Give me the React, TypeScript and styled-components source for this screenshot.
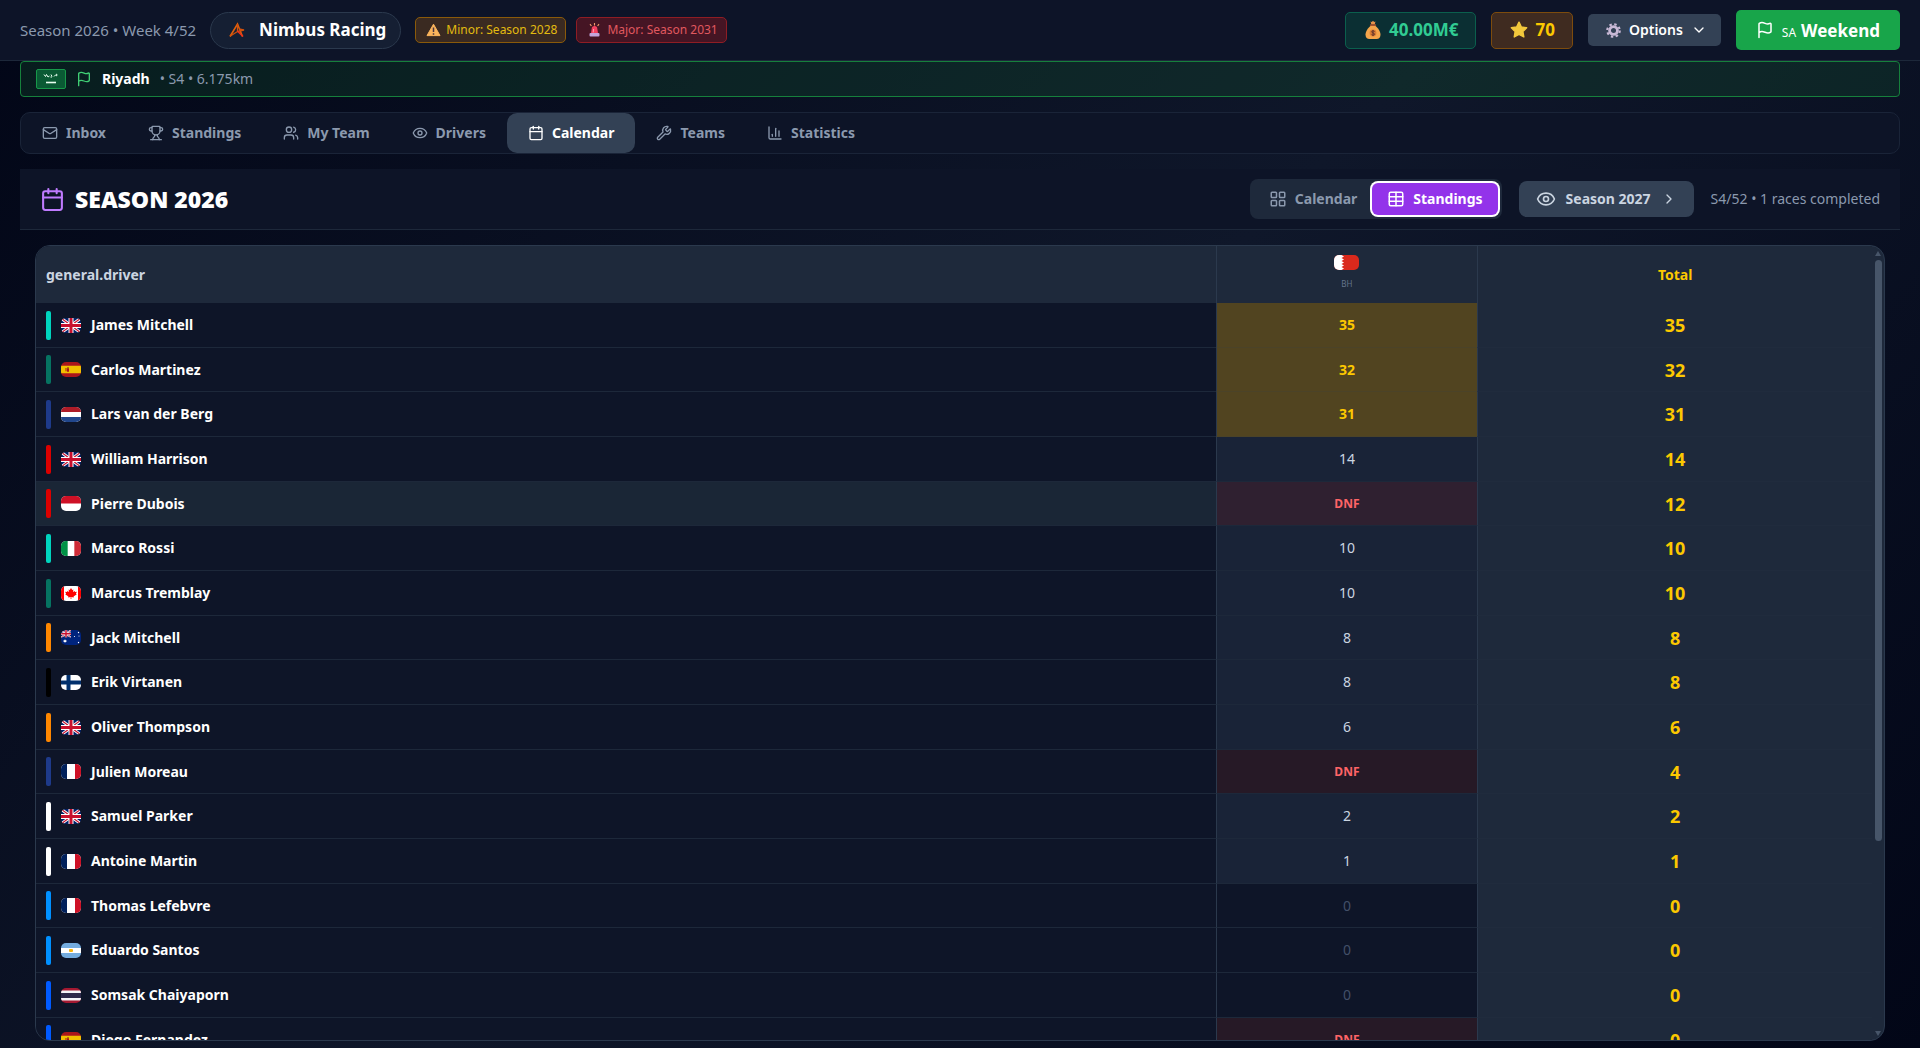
import React from "react";
import styled, { createGlobalStyle, css } from "styled-components";
import {
  Calendar,
  ChartColumn,
  ChevronDown,
  ChevronRight,
  Eye,
  Flag as FlagIcon,
  LayoutGrid,
  Mail,
  Table as TableIcon,
  Trophy,
  Users,
  Wrench,
} from "lucide-react";

const color = {
  text: "#ffffff",
  soft: "#cbd5e1",
  muted: "#8b99ae",
  faint: "#435068",
  line: "#2b394d",
  row: "#1d283a",
  slate: "#1e293b",
  button: "#334155",
  gold: "#fcc800",
};

const GlobalStyle = createGlobalStyle`
  *, *::before, *::after { box-sizing: border-box; }
  body {
    margin: 0;
    background: #020617;
    color: ${color.text};
    font-family: "Noto Sans", "Open Sans", sans-serif;
    font-size: 14px;
    line-height: 20px;
  }
  button { font: inherit; color: inherit; border: 0; margin: 0; cursor: pointer; }
`;

/* ---------- page ---------- */

const Page = styled.div`
  display: flex;
  flex-direction: column;
  height: 100vh;
  overflow: hidden;
  background: linear-gradient(135deg, #020617 0%, #0f172a 50%, #020617 100%);
`;

const Header = styled.header`
  display: flex;
  align-items: center;
  justify-content: space-between;
  flex: none;
  padding: 10px 20px;
  background: #0d1428;
  border-bottom: 1px solid ${color.row};
`;

const Group = styled.div<{ $gap: number }>`
  display: flex;
  align-items: center;
  gap: ${(p) => p.$gap}px;
`;

const WeekText = styled.span`
  color: ${color.muted};
  font-size: 15px;
`;

const TeamPill = styled.div`
  display: flex;
  align-items: center;
  gap: 13px;
  height: 37px;
  padding: 0 14px 0 17px;
  border: 1px solid ${color.line};
  border-radius: 20px;
  background: #151f33;
  font-size: 17px;
  font-weight: 700;
`;

type Tone = "amber" | "red" | "green" | "brown";
const tones: Record<Tone, [string, string, string]> = {
  amber: ["#3a2a21", "#8a5a0a", "#e3bb10"],
  red: ["#451524", "#8f1d24", "#e0585f"],
  green: ["#0b2f33", "#0b5f4d", "#31cc93"],
  brown: ["#3f2b20", "#7d4c0d", color.gold],
};

const tone = css<{ $tone: Tone }>`
  background: ${(p) => tones[p.$tone][0]};
  border: 1px solid ${(p) => tones[p.$tone][1]};
  color: ${(p) => tones[p.$tone][2]};
`;

const Notice = styled.span<{ $tone: Tone }>`
  ${tone}
  display: flex;
  align-items: center;
  gap: 5px;
  height: 26px;
  padding: 0 8px 0 10px;
  border-radius: 5px;
  font-size: 12px;
`;

const Stat = styled.div<{ $tone: Tone }>`
  ${tone}
  display: flex;
  align-items: center;
  gap: 7px;
  height: 37px;
  padding: 0 17px 0 18px;
  border-radius: 5px;
  font-size: 17px;
  font-weight: 700;
`;

const OptionsButton = styled.button`
  display: flex;
  align-items: center;
  gap: 8px;
  height: 32px;
  padding: 0 14px 0 18px;
  border-radius: 5px;
  background: ${color.button};
  font-weight: 600;
`;

const WeekendButton = styled.button`
  display: flex;
  align-items: center;
  gap: 8px;
  height: 40px;
  padding: 0 20px;
  border-radius: 5px;
  background: #18a54a;
  font-size: 17px;
  font-weight: 700;
`;

const WeekendLabel = styled.span`
  display: flex;
  align-items: baseline;
  gap: 5px;
  padding-top: 4px;

  small { font-size: 12px; font-weight: 400; }
`;

const Main = styled.main`
  display: flex;
  flex-direction: column;
  flex: 1;
  gap: 15px;
  min-height: 0;
  padding: 0 20px 7px;
`;

const Banner = styled.section`
  display: flex;
  align-items: center;
  flex: none;
  gap: 10px;
  height: 36px;
  padding: 0 15px;
  border: 1px solid #16803c;
  border-radius: 4px;
  background: rgba(20, 83, 45, 0.3);
  color: ${color.muted};
`;

const City = styled.strong`
  color: ${color.text};
  font-weight: 700;
`;

/* ---------- navigation ---------- */

const Nav = styled.nav`
  display: flex;
  flex: none;
  border: 1px solid #1a2438;
  border-radius: 10px;
  background: #0d1427;
`;

const NavButton = styled.button<{ $active?: boolean }>`
  display: flex;
  align-items: center;
  gap: 8px;
  height: 40px;
  padding: 0 21px;
  border-radius: 10px;
  background: ${(p) => (p.$active ? color.button : "transparent")};
  color: ${(p) => (p.$active ? color.text : color.muted)};
  font-weight: 700;
`;

/* ---------- season bar ---------- */

const Season = styled.section`
  display: flex;
  align-items: center;
  justify-content: space-between;
  flex: none;
  height: 61px;
  padding: 0 20px;
  border-bottom: 1px solid ${color.row};
  background: #0d1427;
`;

const Title = styled.h1`
  display: flex;
  align-items: center;
  gap: 10px;
  margin: 0;
  font-size: 23px;
  font-weight: 900;
  line-height: 32px;

  svg { color: #bf7bff; }
`;

const Toggle = styled.div`
  display: flex;
  padding: 4px;
  border-radius: 8px;
  background: ${color.slate};
`;

const ToggleButton = styled.button<{ $active?: boolean }>`
  display: flex;
  align-items: center;
  gap: 8px;
  height: 32px;
  padding: 0 15px;
  border-radius: 6px;
  background: ${(p) => (p.$active ? "#9333ea" : "transparent")};
  color: ${(p) => (p.$active ? color.text : color.muted)};
  box-shadow: ${(p) => (p.$active ? "0 0 0 2px #ffffff" : "none")};
  font-weight: 700;
`;

const SeasonButton = styled.button`
  display: flex;
  align-items: center;
  gap: 10px;
  height: 36px;
  padding: 0 17px;
  border-radius: 8px;
  background: ${color.button};
  color: ${color.soft};
  font-weight: 700;
`;

const Progress = styled.span`
  color: ${color.muted};
`;

/* ---------- standings ---------- */

const Panel = styled.section`
  display: flex;
  flex: 1;
  min-height: 0;
  margin: 0 15px;
  border: 1px solid ${color.line};
  border-radius: 15px;
  background: ${color.slate};
  overflow: hidden;
`;

const Scroller = styled.div`
  flex: 1;
  min-width: 0;
  overflow: hidden;
  background: #0e1528;
`;

const Table = styled.table`
  width: 100%;
  border-spacing: 0;
  table-layout: fixed;
`;

const DriverCol = styled.col`
  width: 64.25%;
`;

const RaceCol = styled.col`
  width: 14.25%;
`;

const Head = styled.th<{ $tone?: string }>`
  height: 57px;
  padding: 0 10px;
  background: ${color.slate};
  color: ${(p) => p.$tone ?? color.soft};
  font-weight: 700;
  text-align: center;

  &:first-child { text-align: left; }
  & + & { border-left: 1px solid ${color.line}; }
`;

const RaceHead = styled.div`
  display: flex;
  flex-direction: column;
  align-items: center;
  gap: 8px;
  padding-bottom: 4px;
  color: #64748b;
  font-size: 8px;
  font-weight: 400;
  line-height: 12px;
`;

const Row = styled.tr<{ $mine?: boolean }>`
  background: ${(p) => (p.$mine ? "#1a2636" : "transparent")};

  & > * {
    height: 45px;
    padding: 0 10px;
    border-bottom: 1px solid ${color.row};
  }
  &:nth-child(3n + 2) > * { height: 44px; }
`;

const DriverCell = styled.th`
  text-align: left;
  font-weight: 700;
`;

const Driver = styled.div`
  display: flex;
  align-items: center;
  gap: 10px;
`;

const TeamBar = styled.span<{ $color: string }>`
  width: 5px;
  height: 29px;
  border-radius: 2px;
  background: ${(p) => p.$color};
`;

type Kind = "podium" | "points" | "dnf" | "none";
const kinds: Record<Kind, [string, string, number, number]> = {
  podium: ["#514420", color.gold, 14, 700],
  points: ["#192337", color.soft, 14, 400],
  dnf: ["#261926", "#ff6467", 12, 700],
  none: ["transparent", color.faint, 14, 400],
};

const RaceCell = styled.td<{ $kind: Kind; $mine?: boolean }>`
  border-left: 1px solid ${color.line};
  background: ${(p) => (p.$mine ? "#2f2030" : kinds[p.$kind][0])};
  color: ${(p) => kinds[p.$kind][1]};
  font-size: ${(p) => kinds[p.$kind][2]}px;
  font-weight: ${(p) => kinds[p.$kind][3]};
  text-align: center;
  ${(p) => p.$kind === "podium" && "&&{ border-bottom-color: #4b4328; }"}
`;

const TotalCell = styled.td`
  border-left: 1px solid ${color.line};
  background: ${color.slate};
  color: ${color.gold};
  font-size: 18px;
  font-weight: 700;
  line-height: 24px;
  text-align: center;

  && { border-bottom-color: #202b3d; }
`;

const Scrollbar = styled.div`
  display: flex;
  flex-direction: column;
  align-items: center;
  gap: 4px;
  flex: none;
  width: 12px;
  padding: 5px 0 4px;

  svg { flex: none; }
  svg:last-child { margin-top: auto; }
`;

const Thumb = styled.div`
  width: 7px;
  height: 74%;
  border-radius: 4px;
  background: #475569;
`;

/* ---------- flags ---------- */

const FlagBox = styled.svg`
  flex: none;
  display: block;
  border-radius: 5px;
`;

type Country = "gb" | "es" | "nl" | "mc" | "it" | "ca" | "au" | "fi" | "fr" | "ar" | "th" | "bh";

const names: Record<Country, string> = {
  gb: "United Kingdom",
  es: "Spain",
  nl: "Netherlands",
  mc: "Monaco",
  it: "Italy",
  ca: "Canada",
  au: "Australia",
  fi: "Finland",
  fr: "France",
  ar: "Argentina",
  th: "Thailand",
  bh: "Bahrain",
};

const unionJack = (
  <>
    <rect width="20" height="15" fill="#012169" />
    <path d="M0 0L20 15M20 0L0 15" stroke="#fff" strokeWidth="3" />
    <path d="M0 0L20 15M20 0L0 15" stroke="#c8102e" strokeWidth="1.2" />
    <path d="M10 0V15M0 7.5H20" stroke="#fff" strokeWidth="5" />
    <path d="M10 0V15M0 7.5H20" stroke="#c8102e" strokeWidth="3" />
  </>
);

const art: Record<Country, React.ReactNode> = {
  gb: unionJack,
  es: (
    <>
      <rect width="20" height="15" fill="#aa151b" />
      <rect y="3.75" width="20" height="7.5" fill="#f1bf00" />
      <path d="M4.5 6v3.2h1V6zM6 6.3h2v2.6a1 1 0 0 1-2 0z" fill="#ad1519" />
      <circle cx="7" cy="5.8" r=".7" fill="#7a3b16" />
    </>
  ),
  nl: (
    <>
      <rect width="20" height="15" fill="#fff" />
      <rect width="20" height="5" fill="#ae1c28" />
      <rect y="10" width="20" height="5" fill="#21468b" />
    </>
  ),
  mc: (
    <>
      <rect width="20" height="15" fill="#fff" />
      <rect width="20" height="7.5" fill="#ce1126" />
    </>
  ),
  it: (
    <>
      <rect width="20" height="15" fill="#fff" />
      <rect width="6.67" height="15" fill="#009246" />
      <rect x="13.33" width="6.67" height="15" fill="#ce2b37" />
    </>
  ),
  ca: (
    <>
      <rect width="20" height="15" fill="#fff" />
      <path d="M0 0h3v15H0zM17 0h3v15h-3z" fill="#f00" />
      <path
        d="M10 2l1.2 2 1.2-.5-.4 2.6 1.7-1 .3.8 1.9-.2-1 2 .9.5-3.2 2.2.2 1-2.5-.4.1 2h-.8l.1-2-2.5.4.2-1L4.2 8.2l.9-.5-1-2 1.9.2.3-.8 1.7 1-.4-2.6L8.8 4z"
        fill="#f00"
      />
    </>
  ),
  au: (
    <>
      <rect width="20" height="15" fill="#00247d" />
      <svg width="10" height="7.5" viewBox="0 0 20 15">
        {unionJack}
      </svg>
      <path d="M4 9l.5 1.2 1.3-.2-.8 1 .8 1-1.3-.1L4 13l-.5-1.1-1.3.1.8-1-.8-1 1.3.2z" fill="#fff" />
      <g fill="#fff">
        <circle cx="17.5" cy="2.5" r=".7" />
        <circle cx="13.5" cy="6.5" r=".6" />
        <circle cx="18" cy="6" r=".5" />
        <circle cx="17.5" cy="12.5" r=".7" />
      </g>
    </>
  ),
  fi: (
    <>
      <rect width="20" height="15" fill="#fff" />
      <path d="M7.5 0V15M0 7.5H20" stroke="#002f6c" strokeWidth="4" />
    </>
  ),
  fr: (
    <>
      <rect width="20" height="15" fill="#fff" />
      <rect width="6" height="15" fill="#00205b" />
      <rect x="14" width="6" height="15" fill="#ce1126" />
    </>
  ),
  ar: (
    <>
      <rect width="20" height="15" fill="#74acdf" />
      <rect y="5" width="20" height="5" fill="#fff" />
      <rect x="8" y="6" width="4" height="3" rx="1" fill="#f6b40e" />
    </>
  ),
  th: (
    <>
      <rect width="20" height="15" fill="#a51931" />
      <rect y="2.5" width="20" height="10" fill="#f4f5f8" />
      <rect y="5" width="20" height="5" fill="#2d2a4a" />
    </>
  ),
  bh: (
    <>
      <rect width="20" height="15" fill="#da291c" />
      <path d="M0 0h6l2 1.5-2 1.5 2 1.5-2 1.5 2 1.5-2 1.5 2 1.5-2 1.5 2 1.5-2 1.5H0z" fill="#fff" />
    </>
  ),
};

function CountryFlag({ code, width = 20 }: { code: Country; width?: number }) {
  return (
    <FlagBox width={width} height={15} viewBox="0 0 20 15" preserveAspectRatio="none" role="img" aria-label={names[code]}>
      {art[code]}
    </FlagBox>
  );
}

function SaudiFlag() {
  return (
    <svg width="30" height="20" viewBox="0 0 30 20" role="img" aria-label="Saudi Arabia">
      <rect x=".5" y=".5" width="29" height="19" rx="1.5" fill="#0a5a34" stroke="#17994a" />
      <path
        d="M8 5.5l1.5 2 1-2 1.5 2.5 1.5-1M15 5.5l1 2M18 7.5l1.5-1.5 1.5 1M20 5l1.5 1M14.5 8h1.5"
        stroke="#e9fff1"
        fill="none"
      />
      <path d="M10 13.5h10" stroke="#e9fff1" strokeWidth="1.6" />
    </svg>
  );
}

/* ---------- small drawings ---------- */

function TeamLogo() {
  return (
    <svg width="18" height="18" viewBox="0 0 18 18" fill="none" aria-hidden="true">
      <path d="M2 15.5L9.500 3l5 12.500" stroke="#e2600c" strokeWidth="1.6" />
      <path d="M2 15.2l7.500-4.700 6.500-1.500-5-1M9.500 3v7" stroke="#d0500c" strokeWidth="1.3" />
      <path d="M9.5 10l5.500 5.500" stroke="#f0321c" strokeWidth="1.6" />
    </svg>
  );
}

function WarningIcon() {
  return (
    <svg width="15" height="14" viewBox="0 0 15 14" aria-hidden="true">
      <path d="M7.5 1.2L14 12.6H1z" fill="#fbb55c" stroke="#fbb55c" strokeLinejoin="round" />
      <path d="M7.5 4.5v4.5M7.5 10.2v1.5" stroke="#4a3540" strokeWidth="1.5" />
    </svg>
  );
}

function SirenIcon() {
  return (
    <svg width="15" height="14" viewBox="0 0 15 14" aria-hidden="true">
      <path d="M7.5 0v2.4M3 1.2l1.4 1.8M12 1.2l-1.4 1.8" stroke="#f59a6b" strokeWidth="1.1" />
      <path d="M4 10l.7-4.2a2.8 2.8 0 0 1 5.6 0L11 10z" fill="#f4405f" />
      <path d="M6.2 9.5l.4-3.5" stroke="#ff9db0" strokeWidth="1" />
      <rect x="2.5" y="10" width="10" height="3.5" rx="1" fill="#c3a5dc" />
    </svg>
  );
}

function MoneyBag() {
  return (
    <svg width="18" height="20" viewBox="0 0 18 20" aria-hidden="true">
      <path d="M6.5 1.5l1.3.6L9 .8l1.2 1.3 1.3-.6-.8 3H7.3z" fill="#e8924a" />
      <path
        d="M7 5.5h4c3 2.2 5.5 6 5.5 9.2 0 2.8-1.6 4.3-4 4.3h-7c-2.4 0-4-1.5-4-4.3C1.5 11.5 4 7.7 7 5.5z"
        fill="#f5a54b"
      />
      <rect x="5.8" y="4.2" width="6.4" height="1.8" rx=".9" fill="#a5522f" />
      <circle cx="9" cy="13" r="3.4" fill="#d97c34" />
      <path
        d="M10.6 11.5c-.5-.8-3-.9-3 .3 0 1.4 3 .9 3 2.4 0 1.2-2.6 1.2-3.1.2M9 10v6"
        stroke="#5b2f2a"
        fill="none"
        strokeWidth=".9"
      />
    </svg>
  );
}

function StarIcon() {
  return (
    <svg width="18" height="18" viewBox="0 0 19 19" aria-hidden="true">
      <path
        d="M9.5 1.2l2.5 5.1 5.6.8-4 4 1 5.7-5.1-2.7-5 2.7.9-5.7-4-4 5.6-.8z"
        fill="#f2c83c"
        stroke="#f2c83c"
        strokeWidth="1.5"
        strokeLinejoin="round"
      />
    </svg>
  );
}

function GearIcon() {
  return (
    <svg width="15" height="15" viewBox="0 0 16 16" aria-hidden="true">
      <circle cx="8" cy="8" r="4.2" fill="none" stroke="#c9b9d6" strokeWidth="3" />
      <circle cx="8" cy="8" r="6.7" fill="none" stroke="#c9b9d6" strokeWidth="2.2" strokeDasharray="2.6 2.66" />
    </svg>
  );
}

function Arrow({ down }: { down?: boolean }) {
  return (
    <svg width="6" height="5" viewBox="0 0 6 5" aria-hidden="true">
      <path d={down ? "M0 0h6L3 5z" : "M0 5h6L3 0z"} fill="#475569" />
    </svg>
  );
}

/* ---------- data ---------- */

type Entry = [name: string, country: Country, team: string, kind: Kind, race: string, total: number];

const cyan = "#00d4be";
const green = "#067361";
const navy = "#1e3a8a";
const red = "#dc0000";
const orange = "#ff8700";
const sky = "#0090ff";
const blue = "#005aff";

const entries: Entry[] = [
  ["James Mitchell", "gb", cyan, "podium", "35", 35],
  ["Carlos Martinez", "es", green, "podium", "32", 32],
  ["Lars van der Berg", "nl", navy, "podium", "31", 31],
  ["William Harrison", "gb", red, "points", "14", 14],
  ["Pierre Dubois", "mc", red, "dnf", "DNF", 12],
  ["Marco Rossi", "it", cyan, "points", "10", 10],
  ["Marcus Tremblay", "ca", green, "points", "10", 10],
  ["Jack Mitchell", "au", orange, "points", "8", 8],
  ["Erik Virtanen", "fi", "#000000", "points", "8", 8],
  ["Oliver Thompson", "gb", orange, "points", "6", 6],
  ["Julien Moreau", "fr", navy, "dnf", "DNF", 4],
  ["Samuel Parker", "gb", "#ffffff", "points", "2", 2],
  ["Antoine Martin", "fr", "#ffffff", "points", "1", 1],
  ["Thomas Lefebvre", "fr", sky, "none", "0", 0],
  ["Eduardo Santos", "ar", sky, "none", "0", 0],
  ["Somsak Chaiyaporn", "th", blue, "none", "0", 0],
  ["Diego Fernandez", "es", blue, "dnf", "DNF", 0],
];

const tabs = [
  { label: "Inbox", Icon: Mail },
  { label: "Standings", Icon: Trophy },
  { label: "My Team", Icon: Users },
  { label: "Drivers", Icon: Eye },
  { label: "Calendar", Icon: Calendar },
  { label: "Teams", Icon: Wrench },
  { label: "Statistics", Icon: ChartColumn },
];

export default function App() {
  return (
    <Page>
      <GlobalStyle />
      <Header>
        <Group $gap={14}>
          <WeekText>Season 2026 • Week 4/52</WeekText>
          <TeamPill>
            <TeamLogo />
            Nimbus Racing
          </TeamPill>
          <Group $gap={10}>
            <Notice $tone="amber">
              <WarningIcon />
              Minor: Season 2028
            </Notice>
            <Notice $tone="red">
              <SirenIcon />
              Major: Season 2031
            </Notice>
          </Group>
        </Group>
        <Group $gap={15}>
          <Stat $tone="green">
            <MoneyBag />
            40.00M€
          </Stat>
          <Stat $tone="brown">
            <StarIcon />
            70
          </Stat>
          <OptionsButton type="button">
            <GearIcon />
            Options
            <ChevronDown size={16} />
          </OptionsButton>
          <WeekendButton type="button">
            <FlagIcon size={18} />
            <WeekendLabel>
              <small>SA</small> Weekend
            </WeekendLabel>
          </WeekendButton>
        </Group>
      </Header>

      <Main>
        <Banner>
          <SaudiFlag />
          <FlagIcon size={16} color="#3fce74" />
          <City>Riyadh</City>
          <span>• S4 • 6.175km</span>
        </Banner>

        <Nav>
          {tabs.map(({ label, Icon }) => (
            <NavButton key={label} type="button" $active={label === "Calendar"}>
              <Icon size={16} />
              {label}
            </NavButton>
          ))}
        </Nav>

        <Season>
          <Title>
            <Calendar size={25} />
            SEASON 2026
          </Title>
          <Group $gap={17}>
            <Toggle>
              <ToggleButton type="button">
                <LayoutGrid size={18} />
                Calendar
              </ToggleButton>
              <ToggleButton type="button" $active>
                <TableIcon size={18} />
                Standings
              </ToggleButton>
            </Toggle>
            <SeasonButton type="button">
              <Eye size={20} />
              Season 2027
              <ChevronRight size={16} />
            </SeasonButton>
            <Progress>S4/52 • 1 races completed</Progress>
          </Group>
        </Season>

        <Panel>
          <Scroller>
            <Table>
              <colgroup>
                <DriverCol />
                <RaceCol />
                <col />
              </colgroup>
              <thead>
                <tr>
                  <Head scope="col">general.driver</Head>
                  <Head scope="col">
                    <RaceHead>
                      <CountryFlag code="bh" width={25} />
                      BH
                    </RaceHead>
                  </Head>
                  <Head scope="col" $tone={color.gold}>
                    Total
                  </Head>
                </tr>
              </thead>
              <tbody>
                {entries.map(([name, country, team, kind, race, total]) => {
                  const mine = name === "Pierre Dubois";
                  return (
                    <Row key={name} $mine={mine}>
                      <DriverCell scope="row">
                        <Driver>
                          <TeamBar $color={team} />
                          <CountryFlag code={country} />
                          {name}
                        </Driver>
                      </DriverCell>
                      <RaceCell $kind={kind} $mine={mine}>
                        {race}
                      </RaceCell>
                      <TotalCell>{total}</TotalCell>
                    </Row>
                  );
                })}
              </tbody>
            </Table>
          </Scroller>
          <Scrollbar aria-hidden="true">
            <Arrow />
            <Thumb />
            <Arrow down />
          </Scrollbar>
        </Panel>
      </Main>
    </Page>
  );
}
